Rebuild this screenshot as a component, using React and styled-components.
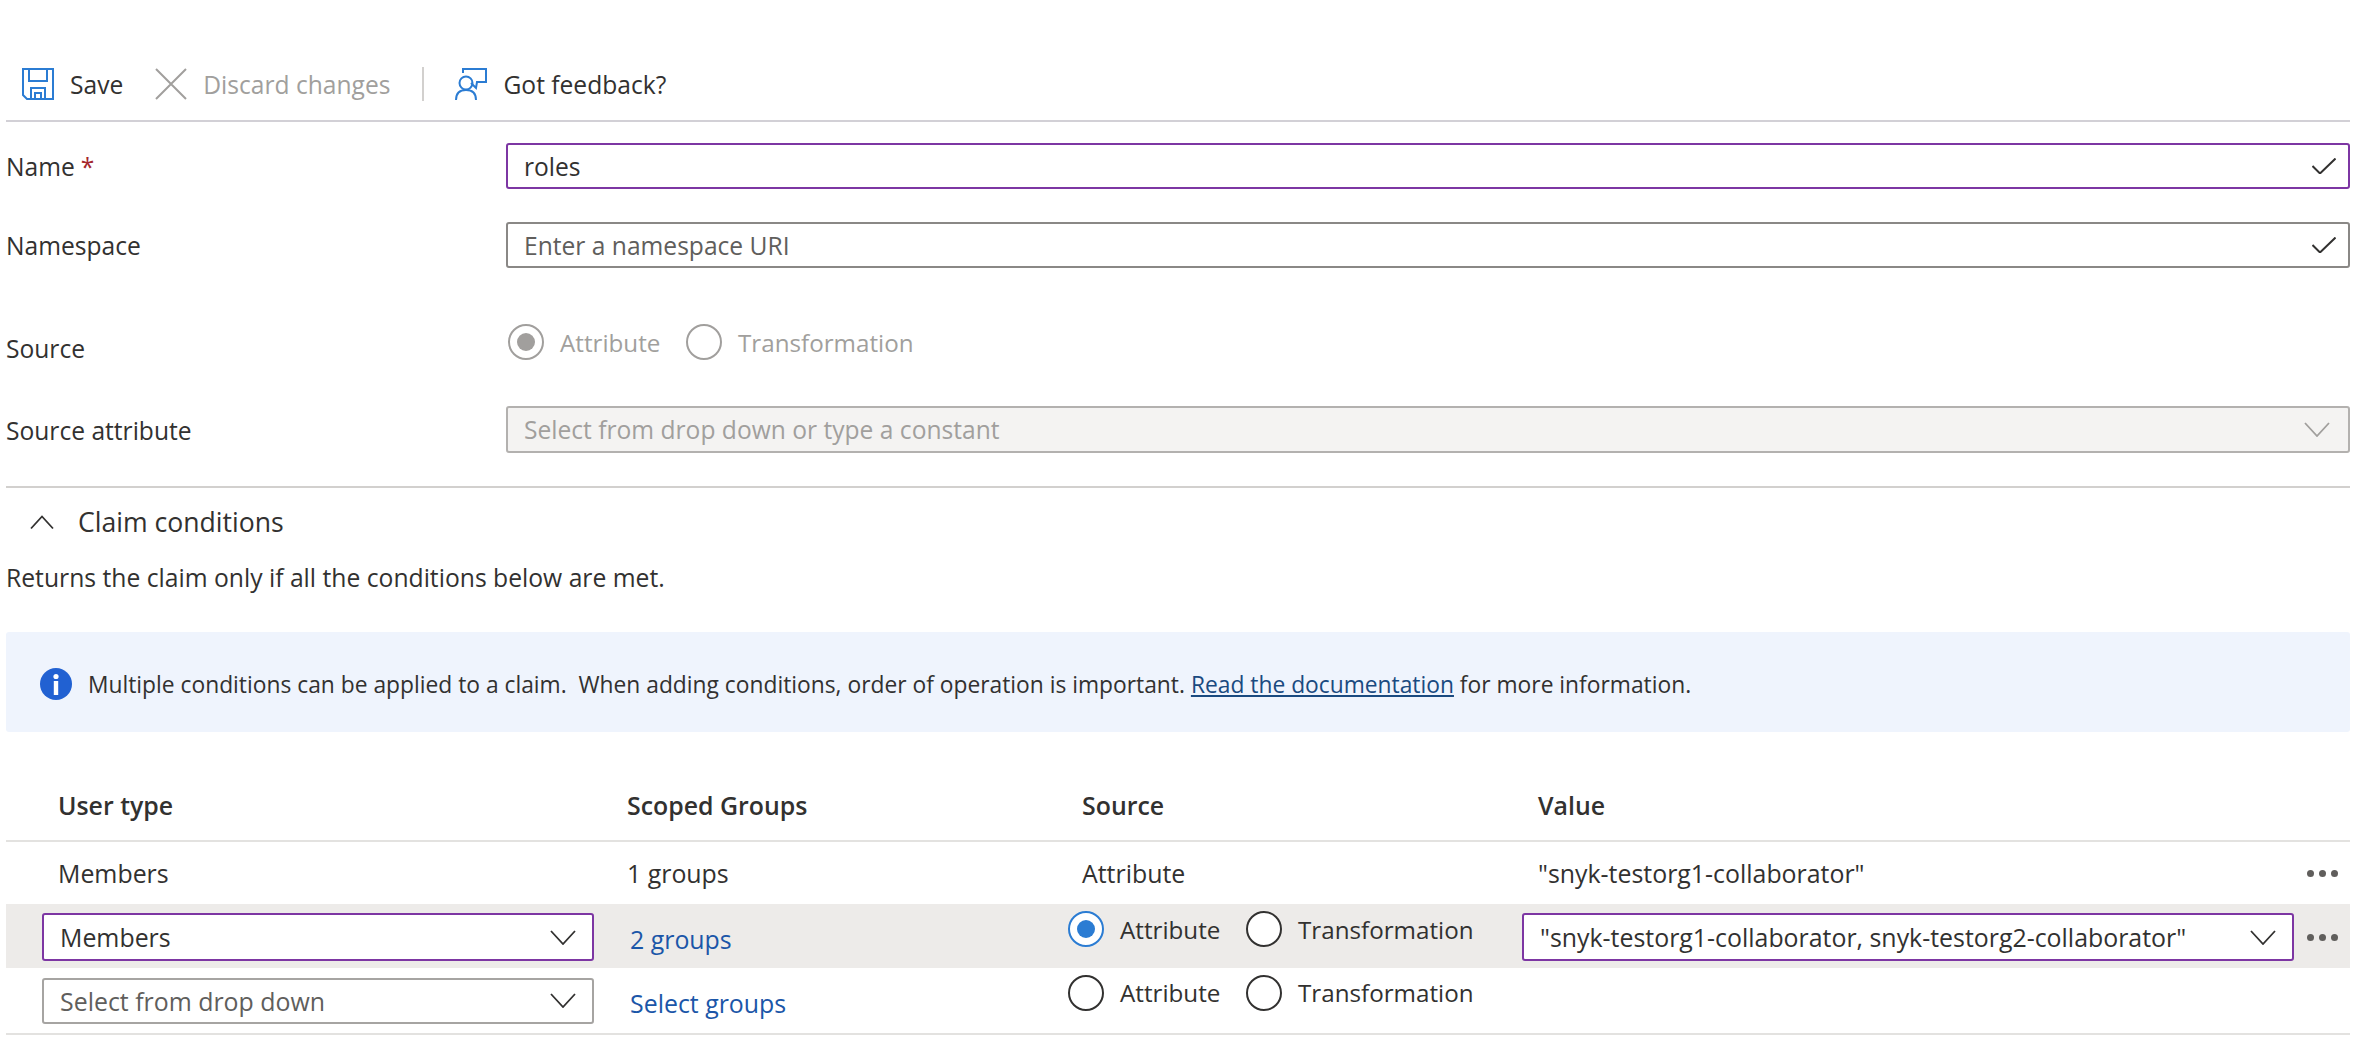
import styled, { createGlobalStyle } from "styled-components";

const GlobalStyle = createGlobalStyle`
   html, body {
      margin: 0;
      padding: 0;
      background: #fff;
      overflow: hidden;
   }
   body {
      font-family: "Open Sans", "Noto Sans", sans-serif;
      font-size: 24.6px;
      color: #323130;
   }
   * { box-sizing: border-box; }
`;

const Page = styled.div`
   width: 2360px;
   height: 1038px;
   padding: 0 10px 0 6px;
   overflow: hidden;
`;

const Toolbar = styled.div`
   display: flex;
   align-items: center;
   height: 122px;
   padding: 68px 0 20px 16px;
   border-bottom: 2px solid #d2d0d6;
`;

const ToolButton = styled.div`
   display: flex;
   align-items: center;
   gap: 16px;
   height: 32px;
   margin-right: ${(p) => p.$gap || 0}px;
   color: ${(p) => (p.$disabled ? "#a19f9d" : "#323130")};
`;

const ToolSep = styled.div`
   width: 2px;
   height: 34px;
   margin-right: 31px;
   background: #d2d0ce;
`;

const FormGrid = styled.div`
   display: grid;
   grid-template-columns: 500px 1fr;
   align-items: center;
   margin-top: ${(p) => p.$top}px;
`;

const Label = styled.label`
   position: relative;
   top: ${(p) => p.$shift || 0}px;
`;

const Required = styled.span`
   color: #a4262c;
   margin-left: 6px;
`;

const Field = styled.div`
   display: flex;
   align-items: center;
   width: ${(p) => p.$width || "auto"};
   height: ${(p) => p.$height || 46}px;
   padding: 0 ${(p) => p.$right || 12}px 0 ${(p) => p.$left || 16}px;
   border: 2px solid ${(p) => (p.$focus ? "#7d36a3" : p.$disabled ? "#b3b1af" : p.$soft ? "#a6a4a2" : "#8a8886")};
   border-radius: 3px;
   background: ${(p) => (p.$disabled ? "#f4f3f2" : "#fff")};
`;

const FieldInput = styled.input`
   flex: 1;
   min-width: 0;
   padding: 0;
   border: none;
   outline: none;
   background: transparent;
   font: inherit;
   color: #323130;
   &::placeholder {
      color: ${(p) => (p.disabled ? "#a19f9d" : "#605e5c")};
      opacity: 1;
   }
`;

const RadioGroup = styled.div`
   display: grid;
   grid-template-columns: 178px auto;
   width: max-content;
   position: relative;
   top: ${(p) => p.$shift || 0}px;
   margin-left: ${(p) => p.$left || 0}px;
   font-size: 24.2px;
`;

const RadioItem = styled.div`
   display: flex;
   align-items: center;
   gap: 16px;
   color: ${(p) => (p.$disabled ? "#a19f9d" : "#323130")};
`;

const RadioCircle = styled.span`
   flex: none;
   display: flex;
   align-items: center;
   justify-content: center;
   width: 36px;
   height: 36px;
   border-radius: 50%;
   background: #fff;
   border: 2px solid ${(p) => (p.$disabled ? "#a19f9d" : p.$checked ? "#2b7cd3" : "#323130")};
   &::after {
      content: "";
      display: ${(p) => (p.$checked ? "block" : "none")};
      width: 18px;
      height: 18px;
      border-radius: 50%;
      background: ${(p) => (p.$disabled ? "#a19f9d" : "#2b7cd3")};
   }
`;

const Divider = styled.div`
   height: 2px;
   margin-top: 33px;
   background: #d2d0ce;
`;

const ClaimHeader = styled.div`
   display: flex;
   align-items: center;
   gap: 24px;
   height: 36px;
   margin-top: 16px;
   padding-left: 24px;
   font-size: 26.6px;
`;

const Description = styled.div`
   margin-top: 20px;
   line-height: 36px;
   font-size: 24.7px;
`;

const Banner = styled.div`
   display: flex;
   align-items: center;
   gap: 16px;
   height: 100px;
   margin-top: 36px;
   padding: 4px 0 0 34px;
   border-radius: 3px;
   background: #eff4fd;
   font-size: 22.8px;
`;

const DocLink = styled.a`
   color: #1a4a80;
   text-decoration: underline;
`;

const TableRow = styled.div`
   display: grid;
   grid-template-columns: 621px 441px 454px 1fr;
   align-items: center;
   height: ${(p) => p.$height}px;
   margin-top: ${(p) => p.$top || 0}px;
   padding-top: ${(p) => p.$padTop || 0}px;
   padding-bottom: ${(p) => p.$padBottom || 0}px;
   background: ${(p) => (p.$active ? "#edebe9" : "transparent")};
   border-bottom: ${(p) => (p.$line ? "2px solid #e3e2e0" : "none")};
   font-weight: ${(p) => (p.$head ? 600 : 400)};
   font-size: 24.9px;
`;

const Cell = styled.div`
   display: flex;
   align-items: center;
   min-width: 0;
   padding-left: ${(p) => p.$indent || 0}px;
   padding-right: ${(p) => p.$right || 0}px;
`;

const GroupLink = styled.a`
   position: relative;
   top: 2px;
   margin-left: 3px;
   color: #1b56a8;
`;

const SelectText = styled.span`
   flex: 1;
   min-width: 0;
   white-space: nowrap;
   color: ${(p) => (p.$muted ? "#605e5c" : "#323130")};
`;

const Dots = styled.span`
   display: flex;
   gap: 5px;
   margin-left: auto;
   span {
      width: 7px;
      height: 7px;
      border-radius: 50%;
      background: #605e5c;
   }
`;

function SaveIcon() {
   return (
      <svg width="32" height="32" viewBox="0 0 32 32" fill="none" stroke="#2b7cd3" strokeWidth="2">
         <path d="M1 1H31V31H5L1 27Z" />
         <path d="M7 1V13H25V1" />
         <path d="M9 31V20H23V31" />
         <path d="M13 31V25H19V31" />
      </svg>
   );
}

function CloseIcon() {
   return (
      <svg width="32" height="32" viewBox="0 0 32 32" fill="none" stroke="#a19f9d" strokeWidth="2">
         <path d="M1 1L31 31M31 1L1 31" />
      </svg>
   );
}

function FeedbackIcon() {
   return (
      <svg width="32" height="32" viewBox="0 0 32 32" fill="none" stroke="#2b7cd3" strokeWidth="2">
         <path d="M8 5V1H31V14H22L21 20L16 15" />
         <circle cx="11" cy="15" r="6.5" />
         <path d="M1 32C1 25 5 22 11 22C17 22 21 25 21 32" />
      </svg>
   );
}

function CheckIcon() {
   return (
      <svg width="24" height="16" viewBox="0 0 24 16" fill="none" stroke="#323130" strokeWidth="2">
         <path d="M0.5 8L8 15.5L23.5 0.5" />
      </svg>
   );
}

function Chevron({ up, color = "#323130", width = 26 }) {
   const d = up ? "M1 13L12 1L23 13" : "M1 1L13 14L25 1";
   return (
      <svg width={width} height="15" viewBox={up ? "0 0 24 14" : "0 0 26 15"} fill="none" stroke={color} strokeWidth="1.8">
         <path d={d} />
      </svg>
   );
}

function InfoIcon() {
   return (
      <svg width="32" height="32" viewBox="0 0 32 32">
         <circle cx="16" cy="16" r="16" fill="#2161d2" />
         <circle cx="16" cy="8.5" r="2.6" fill="#fff" />
         <rect x="13.8" y="13" width="4.4" height="14" fill="#fff" />
      </svg>
   );
}

function Radio({ label, checked, disabled }) {
   return (
      <RadioItem $disabled={disabled}>
         <RadioCircle $checked={checked} $disabled={disabled} />
         {label}
      </RadioItem>
   );
}

function SourceRadios({ checked, disabled, shift, left }) {
   return (
      <RadioGroup $shift={shift} $left={left}>
         <Radio label="Attribute" checked={checked} disabled={disabled} />
         <Radio label="Transformation" disabled={disabled} />
      </RadioGroup>
   );
}

function More() {
   return (
      <Dots>
         <span />
         <span />
         <span />
      </Dots>
   );
}

function App() {
   return (
      <Page>
         <GlobalStyle />
         <Toolbar>
            <ToolButton $gap={32}><SaveIcon />Save</ToolButton>
            <ToolButton $gap={32} $disabled><CloseIcon />Discard changes</ToolButton>
            <ToolSep />
            <ToolButton><FeedbackIcon />Got feedback?</ToolButton>
         </Toolbar>

         <FormGrid $top={21}>
            <Label>Name<Required>*</Required></Label>
            <Field $focus>
               <FieldInput defaultValue="roles" />
               <CheckIcon />
            </Field>
         </FormGrid>
         <FormGrid $top={33}>
            <Label>Namespace</Label>
            <Field>
               <FieldInput placeholder="Enter a namespace URI" />
               <CheckIcon />
            </Field>
         </FormGrid>
         <FormGrid $top={56}>
            <Label $shift={6}>Source</Label>
            <SourceRadios checked disabled left={2} />
         </FormGrid>
         <FormGrid $top={46}>
            <Label $shift={1}>Source attribute</Label>
            <Field $disabled $height={47} $right={18}>
               <FieldInput disabled placeholder="Select from drop down or type a constant" />
               <Chevron color="#a19f9d" />
            </Field>
         </FormGrid>

         <Divider />
         <ClaimHeader>
            <Chevron up width={24} />
            <span>Claim conditions</span>
         </ClaimHeader>
         <Description>Returns the claim only if all the conditions below are met.</Description>

         <Banner>
            <InfoIcon />
            <span>
               Multiple conditions can be applied to a claim.&nbsp; When adding conditions, order of operation is important.{" "}
               <DocLink>Read the documentation</DocLink> for more information.
            </span>
         </Banner>

         <TableRow $head $line $height={58} $top={52} $padBottom={14}>
            <Cell $indent={52}>User type</Cell>
            <Cell>Scoped Groups</Cell>
            <Cell $indent={14}>Source</Cell>
            <Cell $indent={16}>Value</Cell>
         </TableRow>
         <TableRow $height={62}>
            <Cell $indent={52}>Members</Cell>
            <Cell>1 groups</Cell>
            <Cell $indent={14}>Attribute</Cell>
            <Cell $indent={16} $right={12}>"snyk-testorg1-collaborator"<More /></Cell>
         </TableRow>
         <TableRow $active $height={64} $padTop={2}>
            <Cell $indent={36} $right={33}>
               <Field $focus $height={48} $width="100%" $right={16}>
                  <SelectText>Members</SelectText>
                  <Chevron />
               </Field>
            </Cell>
            <Cell><GroupLink>2 groups</GroupLink></Cell>
            <Cell><SourceRadios checked shift={-8} /></Cell>
            <Cell $right={12}>
               <Field $focus $height={48} $width="772px" $left={16} $right={16}>
                  <SelectText>"snyk-testorg1-collaborator, snyk-testorg2-collaborator"</SelectText>
                  <Chevron />
               </Field>
               <More />
            </Cell>
         </TableRow>
         <TableRow $line $height={67}>
            <Cell $indent={36} $right={33}>
               <Field $soft $width="100%" $right={16}>
                  <SelectText $muted>Select from drop down</SelectText>
                  <Chevron />
               </Field>
            </Cell>
            <Cell><GroupLink>Select groups</GroupLink></Cell>
            <Cell><SourceRadios shift={-8} /></Cell>
            <Cell />
         </TableRow>
      </Page>
   );
}

export default App;
